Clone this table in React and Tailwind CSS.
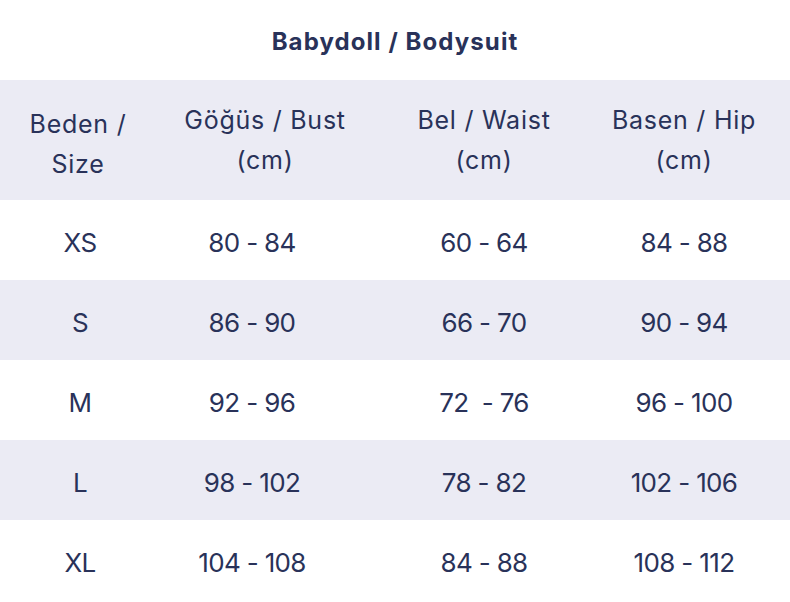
import React from 'react';

const rows = [
  ['XS', '80 - 84', '60 - 64', '84 - 88'],
  ['S', '86 - 90', '66 - 70', '90 - 94'],
  ['M', '92 - 96', '72  - 76', '96 - 100'],
  ['L', '98 - 102', '78 - 82', '102 - 106'],
  ['XL', '104 - 108', '84 - 88', '108 - 112'],
];

const widths = ['w-[160px]', 'w-[184px]', 'w-[280px]', 'w-[120px]'];

function Cell({ i, children, className = '' }) {
  return (
    <div className={`${widths[i]} shrink-0 flex justify-center text-center whitespace-pre ${className}`}>
      <div>{children}</div>
    </div>
  );
}

export default function App() {
  return (
    <div className="w-[790px] h-[602px] bg-white text-[#293259] font-['Inter',sans-serif]">
      <h1 className="h-20 flex items-center justify-center pt-1 text-[24px] font-bold tracking-[0.045em]">Babydoll / Bodysuit</h1>

      <div className="flex h-[120px] items-center bg-[#ebebf4] text-[25px] leading-[40px] tracking-[0.03em]">
        <Cell i={0} className="pt-2 pr-1">Beden /{'\n'}Size</Cell>
        <Cell i={1} className="pl-[26px]">Göğüs / Bust{'\n'}(cm)</Cell>
        <Cell i={2}>Bel / Waist{'\n'}(cm)</Cell>
        <Cell i={3}>Basen / Hip{'\n'}(cm)</Cell>
      </div>

      {rows.map((r, i) => (
        <div key={r[0]} className={`flex h-20 items-center pt-1 text-[26px] tracking-[-0.025em] ${i % 2 ? 'bg-[#ebebf4]' : 'bg-white'}`}>
          {r.map((v, j) => (
            <Cell key={j} i={j}>{v}</Cell>
          ))}
        </div>
      ))}
    </div>
  );
}
